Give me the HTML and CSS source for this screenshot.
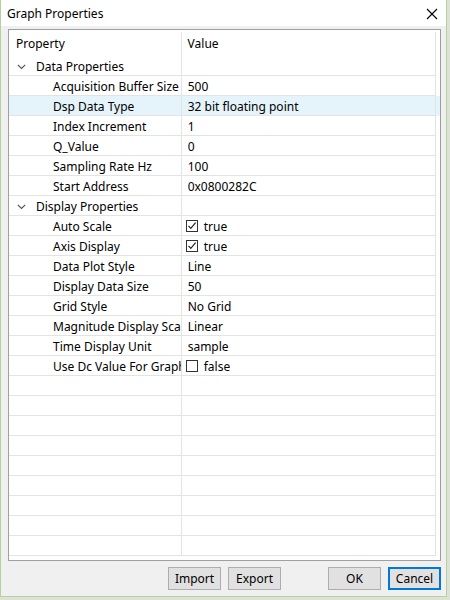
FILE: index.html
```html
<!DOCTYPE html>
<html>
<head>
<meta charset="utf-8">
<link rel="stylesheet" href="styles.css">
</head>
<body>
<div class="window">
  <div class="titlebar">
    <span class="title">Graph Properties</span>
    <svg class="close" width="12" height="12" viewBox="0 0 12 12"><path d="M1 1 L11 11 M11 1 L1 11" stroke="#000" stroke-width="1.1" fill="none"/></svg>
  </div>
  <div class="content">
    <div class="grid">
      <div class="row header">
        <div class="cell label">Property</div>
        <div class="cell value">Value</div>
        <div class="filler"></div>
      </div>

      <div class="row group">
        <div class="cell label"><svg class="chev" width="9" height="6" viewBox="0 0 9 6"><path d="M0.8 0.8 L4.5 4.5 L8.2 0.8" stroke="#555" stroke-width="1.2" fill="none"/></svg>Data Properties</div>
        <div class="cell value"></div>
        <div class="filler"></div>
      </div>
      <div class="row"><div class="cell label child">Acquisition Buffer Size</div><div class="cell value">500</div><div class="filler"></div></div>
      <div class="row selected"><div class="cell label child">Dsp Data Type</div><div class="cell value">32 bit floating point</div><div class="filler"></div></div>
      <div class="row"><div class="cell label child">Index Increment</div><div class="cell value">1</div><div class="filler"></div></div>
      <div class="row"><div class="cell label child">Q_Value</div><div class="cell value">0</div><div class="filler"></div></div>
      <div class="row"><div class="cell label child">Sampling Rate Hz</div><div class="cell value">100</div><div class="filler"></div></div>
      <div class="row"><div class="cell label child">Start Address</div><div class="cell value">0x0800282C</div><div class="filler"></div></div>

      <div class="row group">
        <div class="cell label"><svg class="chev" width="9" height="6" viewBox="0 0 9 6"><path d="M0.8 0.8 L4.5 4.5 L8.2 0.8" stroke="#555" stroke-width="1.2" fill="none"/></svg>Display Properties</div>
        <div class="cell value"></div>
        <div class="filler"></div>
      </div>
      <div class="row"><div class="cell label child">Auto Scale</div><div class="cell value check"><svg class="box" width="12" height="12" viewBox="0 0 12 12"><rect x="0.5" y="0.5" width="11" height="11" fill="#fff" stroke="#333"/><path d="M2.5 5.8 L4.8 8.3 L9.6 2.6" stroke="#222" stroke-width="1.2" fill="none"/></svg>true</div><div class="filler"></div></div>
      <div class="row"><div class="cell label child">Axis Display</div><div class="cell value check"><svg class="box" width="12" height="12" viewBox="0 0 12 12"><rect x="0.5" y="0.5" width="11" height="11" fill="#fff" stroke="#333"/><path d="M2.5 5.8 L4.8 8.3 L9.6 2.6" stroke="#222" stroke-width="1.2" fill="none"/></svg>true</div><div class="filler"></div></div>
      <div class="row"><div class="cell label child">Data Plot Style</div><div class="cell value">Line</div><div class="filler"></div></div>
      <div class="row"><div class="cell label child">Display Data Size</div><div class="cell value">50</div><div class="filler"></div></div>
      <div class="row"><div class="cell label child">Grid Style</div><div class="cell value">No Grid</div><div class="filler"></div></div>
      <div class="row"><div class="cell label child">Magnitude Display Scale</div><div class="cell value">Linear</div><div class="filler"></div></div>
      <div class="row"><div class="cell label child">Time Display Unit</div><div class="cell value">sample</div><div class="filler"></div></div>
      <div class="row"><div class="cell label child">Use Dc Value For Graph</div><div class="cell value check"><svg class="box" width="12" height="12" viewBox="0 0 12 12"><rect x="0.5" y="0.5" width="11" height="11" fill="#fff" stroke="#333"/></svg>false</div><div class="filler"></div></div>

      <div class="row"><div class="cell label"></div><div class="cell value"></div><div class="filler"></div></div>
      <div class="row"><div class="cell label"></div><div class="cell value"></div><div class="filler"></div></div>
      <div class="row"><div class="cell label"></div><div class="cell value"></div><div class="filler"></div></div>
      <div class="row"><div class="cell label"></div><div class="cell value"></div><div class="filler"></div></div>
      <div class="row"><div class="cell label"></div><div class="cell value"></div><div class="filler"></div></div>
      <div class="row"><div class="cell label"></div><div class="cell value"></div><div class="filler"></div></div>
      <div class="row"><div class="cell label"></div><div class="cell value"></div><div class="filler"></div></div>
      <div class="row"><div class="cell label"></div><div class="cell value"></div><div class="filler"></div></div>
      <div class="row"><div class="cell label"></div><div class="cell value"></div><div class="filler"></div></div>
    </div>
    <div class="buttons">
      <button class="btn">Import</button>
      <button class="btn">Export</button>
      <button class="btn ok">OK</button>
      <button class="btn default">Cancel</button>
    </div>
  </div>
</div>
</body>
</html>
```
FILE: styles.css
```css
html, body {
  margin: 0;
  padding: 0;
}
body {
  width: 450px;
  height: 600px;
  background: #dde2d6;
  font-family: "Noto Sans", "Liberation Sans", sans-serif;
  font-size: 12px;
  color: #000;
  overflow: hidden;
}
.window {
  width: 445px;
  height: 596px;
  border-left: 1px solid #b7d19c;
  border-right: 1px solid #b7d19c;
  border-bottom: 1px solid #b7d19c;
  display: flex;
  flex-direction: column;
  background: #f0f0f0;
}
.titlebar {
  height: 26px;
  flex: none;
  background: #fff;
  display: flex;
  align-items: center;
  padding-left: 6px;
  padding-right: 8px;
}
.title {
  font-size: 12px;
  line-height: 14px;
  padding-top: 1px;
}
.close {
  margin-left: auto;
  margin-top: 1px;
}
.content {
  flex: 1;
  padding: 3px 5px 0 7px;
  display: flex;
  flex-direction: column;
}
.grid {
  height: 528px;
  border: 1px solid #a0a0a0;
  border-right: 1px solid #9c9c9c;
  background: #fff;
  padding-top: 2px;
  overflow: hidden;
  flex: none;
}
.row {
  display: flex;
  height: 20px;
}
.row.header {
  height: 24px;
}
.cell {
  box-sizing: border-box;
  border-right: 1px solid #e3e3e3;
  border-bottom: 1px solid #e3e3e3;
  white-space: nowrap;
  overflow: hidden;
  display: flex;
  align-items: center;
  line-height: 14px;
  padding-top: 2px;
}
.header .cell {
  border-bottom: none;
  align-items: flex-start;
  padding-top: 5px;
}
.label {
  width: 173px;
  padding-left: 7px;
}
.label.child {
  padding-left: 44px;
}
.value {
  width: 255px;
  padding-left: 6px;
}
.value.check {
  padding-left: 4px;
}
.filler {
  width: 4px;
}
.row.selected {
  background: #e5f3fb;
}
.chev {
  margin-left: 1px;
  margin-right: 10px;
}
.box {
  margin-right: 6px;
  flex: none;
  margin-top: -1px;
}
.buttons {
  display: flex;
  justify-content: flex-end;
  margin-top: 6px;
  gap: 7px;
}
.btn {
  width: 53px;
  height: 23px;
  box-sizing: border-box;
  border: 1px solid #adadad;
  background: #e1e1e1;
  font-family: "Noto Sans", "Liberation Sans", sans-serif;
  font-size: 12px;
  color: #000;
  padding: 0;
  line-height: 14px;
}
.btn.ok {
  margin-left: 40px;
}
.btn.default {
  border: 2px solid #0078d7;
}
```
